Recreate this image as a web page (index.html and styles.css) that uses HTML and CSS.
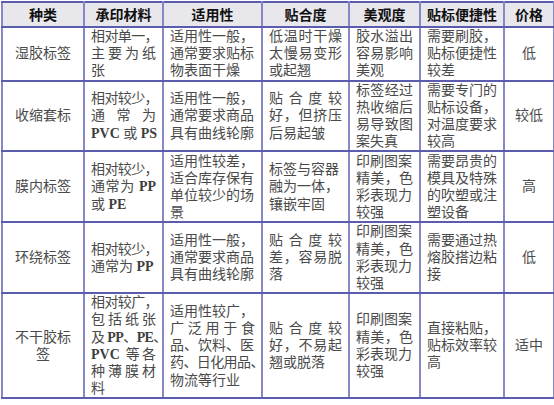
FILE: index.html
```html
<!DOCTYPE html>
<html lang="zh-CN">
<head>
<meta charset="utf-8">
<title>标签对比</title>
<link rel="stylesheet" href="styles.css">
</head>
<body>
<table class="cmp">
  <colgroup>
    <col class="w1"><col class="w2"><col class="w3"><col class="w4"><col class="w5"><col class="w6"><col class="w7">
  </colgroup>
  <thead>
    <tr class="h0">
      <th>种类</th><th>承印材料</th><th>适用性</th><th>贴合度</th><th>美观度</th><th>贴标便捷性</th><th>价格</th>
    </tr>
  </thead>
  <tbody>
    <tr class="r1">
      <td class="c">湿胶标签</td>
      <td><span class="ln t">相对单一，</span><span class="ln j">主要为纸</span><span class="ln">张</span></td>
      <td><span class="ln">适用性一般，</span><span class="ln">通常要求贴标</span><span class="ln">物表面干燥</span></td>
      <td><span class="ln j">低温时干燥</span><span class="ln j">太慢易变形</span><span class="ln">或起翘</span></td>
      <td><span class="ln j">胶水溢出</span><span class="ln j">容易影响</span><span class="ln">美观</span></td>
      <td><span class="ln">需要刷胶，</span><span class="ln">贴标便捷性</span><span class="ln">较差</span></td>
      <td class="c">低</td>
    </tr>
    <tr class="r2">
      <td class="c">收缩套标</td>
      <td><span class="ln t">相对较少，</span><span class="ln j">通常为</span><span class="ln"><span class="en">PVC</span> 或 <span class="en">PS</span></span></td>
      <td><span class="ln">适用性一般，</span><span class="ln">通常要求商品</span><span class="ln">具有曲线轮廓</span></td>
      <td><span class="ln j">贴合度较</span><span class="ln j">好，但挤压</span><span class="ln">后易起皱</span></td>
      <td><span class="ln j">标签经过</span><span class="ln j">热收缩后</span><span class="ln j">易导致图</span><span class="ln">案失真</span></td>
      <td><span class="ln">需要专门的</span><span class="ln">贴标设备，</span><span class="ln">对温度要求</span><span class="ln">较高</span></td>
      <td class="c">较低</td>
    </tr>
    <tr class="r3">
      <td class="c">膜内标签</td>
      <td><span class="ln t">相对较少，</span><span class="ln j">通常为 <span class="en">PP</span></span><span class="ln">或 <span class="en">PE</span></span></td>
      <td><span class="ln">适用性较差，</span><span class="ln">适合库存保有</span><span class="ln">单位较少的场</span><span class="ln">景</span></td>
      <td><span class="ln">标签与容器</span><span class="ln">融为一体，</span><span class="ln">镶嵌牢固</span></td>
      <td><span class="ln">印刷图案</span><span class="ln j">精美，色</span><span class="ln">彩表现力</span><span class="ln">较强</span></td>
      <td><span class="ln">需要昂贵的</span><span class="ln">模具及特殊</span><span class="ln">的吹塑或注</span><span class="ln">塑设备</span></td>
      <td class="c">高</td>
    </tr>
    <tr class="r4">
      <td class="c">环绕标签</td>
      <td><span class="ln t">相对较少，</span><span class="ln">通常为 <span class="en">PP</span></span></td>
      <td><span class="ln">适用性一般，</span><span class="ln">通常要求商品</span><span class="ln">具有曲线轮廓</span></td>
      <td><span class="ln j">贴合度较</span><span class="ln j">差，容易脱</span><span class="ln">落</span></td>
      <td><span class="ln">印刷图案</span><span class="ln j">精美，色</span><span class="ln">彩表现力</span><span class="ln">较强</span></td>
      <td><span class="ln">需要通过热</span><span class="ln">熔胶搭边粘</span><span class="ln">接</span></td>
      <td class="c">低</td>
    </tr>
    <tr class="r5">
      <td class="c"><span class="ln">不干胶标</span><span class="ln">签</span></td>
      <td><span class="ln t">相对较广，</span><span class="ln j">包括纸张</span><span class="ln t">及 <span class="en">PP</span>、<span class="en">PE</span>、</span><span class="ln j"><span class="en">PVC</span> 等各</span><span class="ln j">种薄膜材</span><span class="ln">料</span></td>
      <td><span class="ln">适用性较广，</span><span class="ln j">广泛用于食</span><span class="ln">品、饮料、医</span><span class="ln t">药、日化用品、</span><span class="ln">物流等行业</span></td>
      <td><span class="ln j">贴合度较</span><span class="ln j">好，不易起</span><span class="ln">翘或脱落</span></td>
      <td><span class="ln">印刷图案</span><span class="ln j">精美，色</span><span class="ln">彩表现力</span><span class="ln">较强</span></td>
      <td><span class="ln">直接粘贴，</span><span class="ln">贴标效率较</span><span class="ln">高</span></td>
      <td class="c">适中</td>
    </tr>
  </tbody>
</table>
</body>
</html>
```
FILE: styles.css
```css
html, body {
  margin: 0;
  padding: 0;
  background: #ffffff;
}

body {
  padding: 1px 0 0 1px;
}

.cmp {
  border-collapse: collapse;
  table-layout: fixed;
  width: 552px;
  border: 2px solid #3a3a9a;
  font-family: "Liberation Serif", "Noto Sans CJK SC", serif;
  font-size: 14px;
  color: #4a4a4a;
}

.w1 { width: 82px; }
.w2 { width: 79px; }
.w3 { width: 99px; }
.w4 { width: 87px; }
.w5 { width: 71px; }
.w6 { width: 84px; }
.w7 { width: 50px; }

.cmp th,
.cmp td {
  border-left: 2px solid #8888c6;
  border-right: 2px solid #8888c6;
  border-top: 2px solid #5c5cae;
  border-bottom: 2px solid #5c5cae;
  padding: 0 6px;
  vertical-align: middle;
  line-height: 17.2px;
  text-align: left;
  white-space: nowrap;
}

.cmp th {
  background: #e7e7ec;
  color: #111111;
  font-family: "Noto Sans CJK SC", sans-serif;
  font-weight: 700;
  font-size: 14px;
  text-align: center;
  height: 23px;
  padding: 0 2px;
}

.r1 td { height: 50px; }
.r2 td { height: 68px; }
.r3 td { height: 69px; }
.r4 td { height: 66px; }
.r5 td { height: 102px; }

.cmp td.c {
  text-align: center;
}

.ln {
  display: block;
}

.j {
  text-align: justify;
  text-align-last: justify;
}

.t {
  letter-spacing: -0.6px;
}

.en {
  font-weight: 700;
  color: #3e3e3e;
}
```
